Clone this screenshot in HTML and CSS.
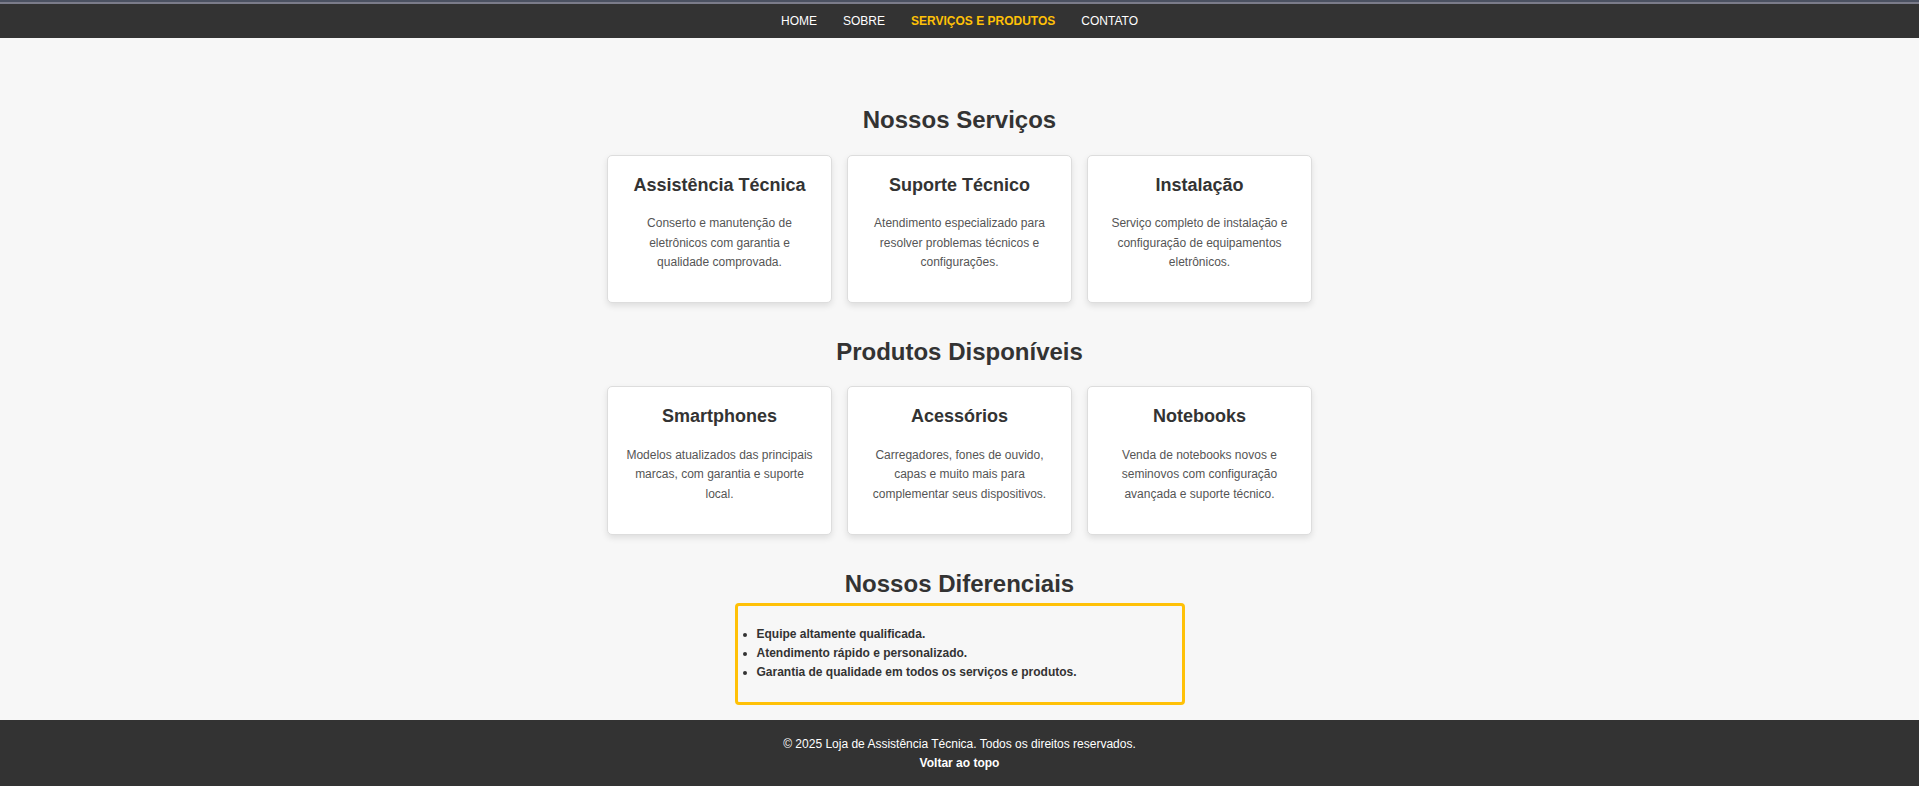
FILE: index.html
```html
<!DOCTYPE html>
<html lang="pt-BR">
<head>
<meta charset="UTF-8">
<meta name="viewport" content="width=device-width, initial-scale=1">
<title>Serviços e Produtos</title>
<link rel="stylesheet" href="styles.css">
</head>
<body>
<div class="strip"></div>
<header class="topbar" id="topo">
  <nav class="menu">
    <a href="#">HOME</a>
    <a href="#">SOBRE</a>
    <a href="#" class="active">SERVIÇOS E PRODUTOS</a>
    <a href="#">CONTATO</a>
  </nav>
</header>
<main class="content">
  <section class="group">
    <h2>Nossos Serviços</h2>
    <div class="cards">
      <article class="card"><h3>Assistência Técnica</h3><p>Conserto e manutenção de eletrônicos com garantia e qualidade comprovada.</p></article>
      <article class="card"><h3>Suporte Técnico</h3><p>Atendimento especializado para resolver problemas técnicos e configurações.</p></article>
      <article class="card"><h3>Instalação</h3><p>Serviço completo de instalação e configuração de equipamentos eletrônicos.</p></article>
    </div>
  </section>
  <section class="group">
    <h2>Produtos Disponíveis</h2>
    <div class="cards">
      <article class="card"><h3>Smartphones</h3><p>Modelos atualizados das principais marcas, com garantia e suporte local.</p></article>
      <article class="card"><h3>Acessórios</h3><p>Carregadores, fones de ouvido, capas e muito mais para complementar seus dispositivos.</p></article>
      <article class="card"><h3>Notebooks</h3><p>Venda de notebooks novos e seminovos com configuração avançada e suporte técnico.</p></article>
    </div>
  </section>
  <section class="highlights">
    <h2>Nossos Diferenciais</h2>
    <ul class="benefits">
      <li>Equipe altamente qualificada.</li>
      <li>Atendimento rápido e personalizado.</li>
      <li>Garantia de qualidade em todos os serviços e produtos.</li>
    </ul>
  </section>
</main>
<footer class="footer">
  <p>© 2025 Loja de Assistência Técnica. Todos os direitos reservados.</p>
  <a href="#topo">Voltar ao topo</a>
</footer>
</body>
</html>
```
FILE: styles.css
```css
* { box-sizing: border-box; margin: 0; padding: 0; }
body {
  font-family: Arial, "Liberation Sans", sans-serif;
  font-size: 12px;
  line-height: 1.6;
  color: #333;
  background: #f7f7f7;
  min-height: 100vh;
  display: flex;
  flex-direction: column;
}
.strip { height: 4px; background: #4b5161; border-bottom: 2px solid #7b7c8a; }
.topbar { background: #333; padding: 8px 0 7px; }
.menu { display: flex; justify-content: center; gap: 26px; }
.menu a { color: #fff; text-decoration: none; }
.menu .active { color: #ffc107; font-weight: bold; }
.content { flex: 1; padding-top: 63px; }
h2 { font-size: 24px; text-align: center; }
.group { margin-bottom: 30px; }
.cards { display: flex; justify-content: center; gap: 15px; margin-top: 15px; }
.card {
  width: 225px;
  padding: 15px 15px 30px;
  text-align: center;
  background: #fff;
  border: 1px solid #ddd;
  border-radius: 5px;
  box-shadow: 0 3px 6px rgba(0, 0, 0, 0.1);
}
.card h3 { font-size: 18px; margin-bottom: 15px; }
.card p { color: #555; }
.benefits {
  width: 450px;
  margin: 0 auto 14px;
  padding: 19px;
  border: 3px solid #ffc107;
  border-radius: 4px;
  font-weight: bold;
}
.footer { background: #333; color: #fff; text-align: center; padding: 15px 0 13px; }
.footer a { color: #fff; font-weight: bold; text-decoration: none; }
```
